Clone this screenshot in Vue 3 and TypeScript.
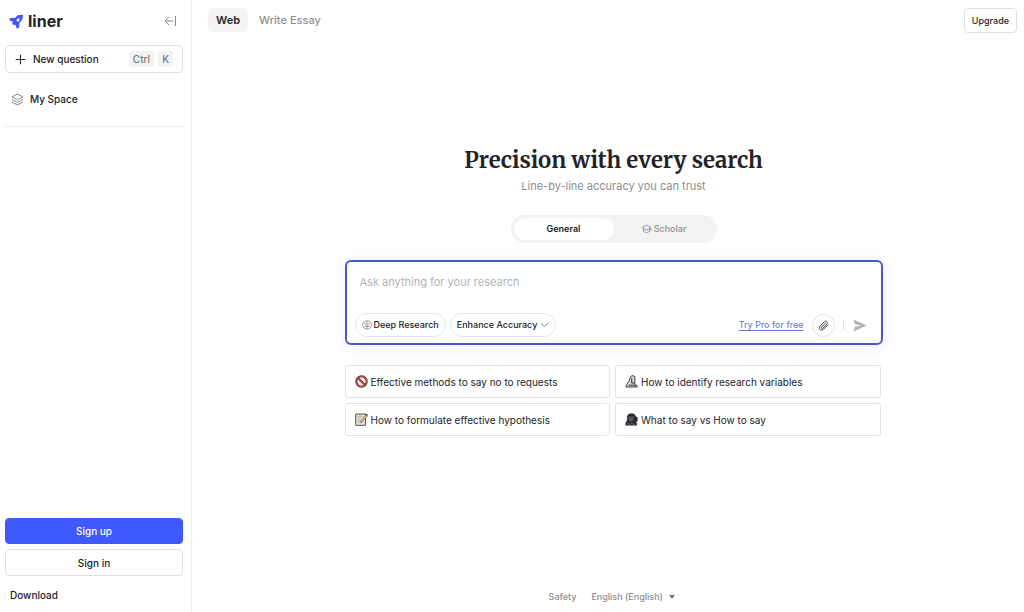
<script setup lang="ts">
import { ref } from 'vue'

type Art = 'prohibited' | 'memo' | 'microscope' | 'speaking'
interface Suggestion {
  art: Art
  text: string
}

const modes = ['Web', 'Write Essay']
const activeMode = ref('Web')
const scope = ref<'General' | 'Scholar'>('General')
const question = ref('')
const language = ref('en')
const suggestions: Suggestion[] = [
  { art: 'prohibited', text: 'Effective methods to say no to requests' },
  { art: 'microscope', text: 'How to identify research variables' },
  { art: 'memo', text: 'How to formulate effective hypothesis' },
  { art: 'speaking', text: 'What to say vs How to say' },
]
</script>

<template>
  <div class="page">
    <aside class="sidebar">
      <div class="brand-row">
        <a class="brand" href="#" aria-label="liner home">
          <svg class="logo" viewBox="0 0 15 15" aria-hidden="true">
            <path d="M14.2.7 8.6 1.300 6.300 3.800.9 4.200.3 6.300l3.300 1.300-.3 2.200 1 1.100 2.200-.2 1.200 3.800 2.300-.6.500-5.200 2.600-2.600z" fill="#4257f5" />
            <path d="m8.300 4.700 2.500-.4-.5 2.500L8.900 8 7.200 6.300z" fill="#e3e8ff" />
          </svg>
          <span class="wordmark">liner</span>
        </a>
        <button class="collapse" type="button" aria-label="Collapse sidebar">
          <svg viewBox="0 0 13 12" aria-hidden="true">
            <path d="M9.500 6H1M5 2 1 6l4 4M11.500 1v10" fill="none" stroke="#88888c" />
          </svg>
        </button>
      </div>

      <button class="new-question" type="button">
        <svg viewBox="0 0 12 12" aria-hidden="true">
          <path d="M6 .8v10.400M.8 6h10.400" fill="none" stroke="#28282c" stroke-width="1.200" />
        </svg>
        <span class="grow">New question</span>
        <kbd>Ctrl</kbd>
        <kbd>K</kbd>
      </button>

      <nav class="space-nav">
        <a class="space" href="#">
          <svg viewBox="0 0 13 13" aria-hidden="true">
            <path d="M6.500 1 12 3.900 6.500 6.800 1 3.900zM1 6.500l5.500 2.900L12 6.500M1 9.100 6.500 12 12 9.100" fill="none" stroke="#7c7c80" stroke-width=".9" stroke-linejoin="round" />
          </svg>
          My Space
        </a>
      </nav>

      <div class="account">
        <button class="sign-up" type="button">Sign up</button>
        <button class="sign-in" type="button">Sign in</button>
        <a class="download" href="#">Download</a>
      </div>
    </aside>

    <div class="content">
      <header class="topbar">
        <nav class="modes">
          <button
            v-for="mode in modes"
            :key="mode"
            type="button"
            class="mode"
            :class="{ active: activeMode === mode }"
            @click="activeMode = mode"
          >{{ mode }}</button>
        </nav>
        <button class="upgrade" type="button">Upgrade</button>
      </header>

      <main class="hero">
        <h1>Precision with every search</h1>
        <p class="tagline">Line-by-line accuracy you can trust</p>

        <div class="scopes">
          <button type="button" :class="{ active: scope === 'General' }" @click="scope = 'General'">General</button>
          <button type="button" :class="{ active: scope === 'Scholar' }" @click="scope = 'Scholar'">
            <svg viewBox="0 0 12 11" aria-hidden="true">
              <path d="M6 1.300 11 4 6 6.700 1 4zM2.700 5.200v3.100Q6 10.900 9.300 8.300V5.200M11 4v3.600" fill="none" stroke="#919195" stroke-linejoin="round" />
            </svg>
            Scholar
          </button>
        </div>

        <form class="ask" @submit.prevent>
          <textarea v-model="question" rows="1" aria-label="Question" placeholder="Ask anything for your research"></textarea>
          <div class="tools">
            <button class="pill" type="button">
              <svg class="brain" viewBox="0 0 11 11" aria-hidden="true">
                <path d="M5.500 1.200C4.400.3 2.900.8 2.600 2 1.200 2.200.7 3.500 1.100 4.500.1 5.400.6 7 1.600 7.400c-.1 1.400 1 2.100 2 1.900.4.9 1.400 1 1.900.5.5.5 1.500.4 1.900-.5 1 .2 2.100-.5 2-1.900 1-.4 1.500-2 .5-2.900.4-1-.1-2.300-1.500-2.500C8.100.8 6.600.3 5.500 1.200zM5.500 1.200v8.600M2.600 3.700q1.400 0 1.400 1.500M2.500 7h3M8.400 3.700Q7 3.700 7 5.200M8.500 7h-3" fill="none" stroke="#77777b" stroke-width=".8" />
              </svg>
              Deep Research
            </button>
            <button class="pill" type="button">
              Enhance Accuracy
              <svg class="chevron" viewBox="0 0 9 6" aria-hidden="true">
                <path d="m.8 1 3.700 3.700L8.200 1" fill="none" stroke="#88888c" />
              </svg>
            </button>
            <a class="try-pro" href="#">Try Pro for free</a>
            <button class="attach" type="button" aria-label="Attach a file">
              <svg viewBox="0 0 12 12" aria-hidden="true">
                <path d="m10.800 5.200-4.700 4.900c-1 1-2.700 1.300-3.800.3s-.9-2.700.1-3.800l4.500-4.700c.8-.8 2-.9 2.800-.1s.7 2-.1 2.800L5.300 9c-.4.400-1 .5-1.400.1s-.4-1 0-1.400L8 3.500" fill="none" stroke="#3b3b3f" stroke-linecap="round" />
              </svg>
            </button>
            <span class="rule"></span>
            <button class="send" type="submit" aria-label="Send">
              <svg viewBox="0 0 14 13" aria-hidden="true">
                <path d="M.5.500 13.700 6.500.5 12.500 1.900 7.700 8 6.500 1.900 5.300z" fill="#b2b2b5" />
              </svg>
            </button>
          </div>
        </form>

        <div class="suggestions">
          <button v-for="item in suggestions" :key="item.text" type="button" class="suggestion">
            <svg v-if="item.art === 'prohibited'" viewBox="0 0 13 13" aria-hidden="true">
              <circle cx="6.500" cy="6.500" r="5.200" fill="#f1e9e8" stroke="#5d302d" stroke-width="2" />
              <path d="m3 3 7 7" stroke="#5d302d" stroke-width="1.800" />
              <circle cx="6.500" cy="6.500" r="5.200" fill="none" stroke="#b84a42" stroke-width="1.100" />
              <path d="m3 3 7 7" stroke="#b84a42" stroke-width="1" />
            </svg>
            <svg v-else-if="item.art === 'memo'" viewBox="0 0 13 13" aria-hidden="true">
              <path d="M.7 1h9.800v11.300H.7z" fill="#e7e5da" stroke="#55554f" />
              <path d="M2.300 3.200h5M2.300 5.200h4M2.300 7.200h3M2.300 9.200h4" stroke="#999991" stroke-width=".7" />
              <path d="m5.600 9.700.7-2.400 4.600-5.600 1.500 1.200-4.700 5.700z" fill="#e4c980" stroke="#5c5030" stroke-width=".6" />
              <path d="m10.900 1.700.8-.9 1.100.9-.4 1.200z" fill="#44363a" />
            </svg>
            <svg v-else-if="item.art === 'microscope'" viewBox="0 0 13 13" aria-hidden="true">
              <path d="M1 12h11v-1.700H9.900V1.800L8.600.8H6.500L4.600 3.500v2.200Q2.200 7 1.900 9.800L1 10.600z" fill="#d4d7d8" stroke="#3c3f41" />
              <path d="M6.700 3.200V8h3M3.500 10.200h6.400" fill="none" stroke="#35393b" />
            </svg>
            <svg v-else viewBox="0 0 13 13" aria-hidden="true">
              <path d="M2.300 7.600V3.500Q2.800.7 6 .7h1.700q2.700.5 2.800 2.900l1.800.8v3.700l-1.800.8 1.200 1.300v2H.8V9.800z" fill="#292a2d" stroke="#202124" stroke-width=".5" />
              <path d="M3.600 3.300q3.600 1.200 5-.8v4L7.200 8.600H4.900L3.400 6.500z" fill="#56585d" />
              <path d="m1.700 10.300 2.600 1.200 2.500-1 2.800 1.100" fill="none" stroke="#77787b" stroke-width=".8" />
            </svg>
            {{ item.text }}
          </button>
        </div>
      </main>

      <footer class="footer">
        <a href="#">Safety</a>
        <label class="language">
          <select v-model="language" aria-label="Language">
            <option value="en">English (English)</option>
          </select>
          <svg viewBox="0 0 6 4" aria-hidden="true"><path d="M0 0h6L3 4z" fill="#77777b" /></svg>
        </label>
      </footer>
    </div>
  </div>
</template>

<style>
body {
  margin: 0;
  background: #fff;
}
</style>

<style scoped>
.page,
.page * {
  box-sizing: border-box;
}
.page {
  display: flex;
  min-height: 100vh;
  color: #232327;
  font: 500 10px/16px Inter, "Liberation Sans", sans-serif;
}
button,
textarea,
select,
kbd {
  margin: 0;
  font: inherit;
  color: inherit;
}
button {
  padding: 0;
  border: 0;
  background: none;
  cursor: pointer;
}
a {
  color: inherit;
  text-decoration: none;
}
svg {
  display: block;
  flex: none;
}
.sidebar {
  display: flex;
  flex-direction: column;
  flex: 0 0 192px;
  padding: 8px 8px 8px 5px;
  border-right: 1px solid #efeff1;
}
.brand-row {
  display: flex;
  align-items: center;
  justify-content: space-between;
  height: 26px;
  padding: 0 6px 0 4px;
}
.brand {
  display: flex;
  align-items: center;
  gap: 4px;
}
.logo {
  width: 15px;
  height: 15px;
}
.wordmark {
  font-size: 16px;
  line-height: 24px;
  font-weight: 700;
}
.collapse svg {
  width: 13px;
  height: 12px;
}
.new-question {
  display: flex;
  align-items: center;
  gap: 4px;
  height: 28px;
  margin-top: 11px;
  padding: 0 9px;
  border: 1px solid #e0e0e3;
  border-radius: 4px;
  text-align: left;
}
.new-question svg {
  width: 11px;
  height: 11px;
  margin-right: 3px;
}
.grow {
  flex: 1;
}
kbd {
  padding: 0 4px;
  border-radius: 3px;
  background: #f3f3f5;
  color: #77777b;
}
.space-nav {
  margin-top: 12px;
  padding-bottom: 13px;
  border-bottom: 1px solid #ececee;
}
.space {
  display: flex;
  align-items: center;
  gap: 6px;
  height: 28px;
  padding-left: 6px;
}
.space svg {
  width: 13px;
  height: 13px;
}
.account {
  display: flex;
  flex-direction: column;
  gap: 5px;
  margin-top: auto;
}
.sign-up,
.sign-in {
  height: 27px;
  border: 1px solid #e0e0e3;
  border-radius: 4px;
}
.sign-up {
  height: 26px;
  border-color: #4059ff;
  background: #4059ff;
  color: #fff;
}
.download {
  padding: 6px 5px 1px;
}
.content {
  display: flex;
  flex: 1;
  flex-direction: column;
  min-width: 0;
}
.topbar {
  display: flex;
  justify-content: space-between;
  padding: 8px 7px 0 16px;
}
.modes {
  display: flex;
  gap: 3px;
}
.mode {
  height: 24px;
  padding: 0 8px;
  border-radius: 5px;
  color: #8e8e92;
  font-size: 11px;
}
.mode.active {
  background: #f3f3f4;
  color: #232327;
  font-weight: 600;
}
.upgrade {
  height: 25px;
  padding: 0 7px;
  border: 1px solid #e0e0e3;
  border-radius: 4px;
  font-size: 9px;
}
.hero {
  display: flex;
  flex: 1;
  flex-direction: column;
  align-items: center;
  padding: 111px 16px 16px 27px;
}
h1 {
  margin: 0;
  font: 700 22px/32px Merriweather, "Noto Serif", "DejaVu Serif Condensed", "DejaVu Serif", serif;
}
.tagline {
  margin: 2px 0 0;
  color: #8e8e92;
  font-size: 11px;
  font-weight: 400;
}
.scopes {
  display: flex;
  width: 206px;
  height: 28px;
  margin-top: 21px;
  padding: 3px;
  border-radius: 14px;
  background: #f3f3f4;
}
.scopes button {
  display: flex;
  flex: 1;
  align-items: center;
  justify-content: center;
  gap: 2px;
  border-radius: 11px;
  color: #919195;
  font-size: 9px;
}
.scopes .active {
  background: #fff;
  color: #232327;
  font-weight: 600;
}
.scopes svg {
  width: 11px;
  height: 10px;
}
.ask {
  width: 100%;
  max-width: 538px;
  margin-top: 17px;
  padding: 12px 8px 6px;
  border: 2px solid #4a57cd;
  border-radius: 6px;
  box-shadow: 0 2px 12px #4059ff1c;
}
textarea {
  display: block;
  width: 100%;
  height: 39px;
  padding: 0 5px;
  border: 0;
  outline: 0;
  resize: none;
  background: none;
  font-size: 11px;
  font-weight: 400;
}
textarea::placeholder {
  color: #b4b4b8;
}
.tools {
  display: flex;
  align-items: center;
  gap: 4px;
}
.pill {
  display: flex;
  align-items: center;
  gap: 2px;
  height: 24px;
  padding: 0 6px;
  border: 1px solid #e8e8ea;
  border-radius: 12px;
  font-size: 9px;
}
.brain {
  width: 10px;
  height: 10px;
}
.chevron {
  width: 9px;
  height: 6px;
  margin-left: 1px;
}
.try-pro {
  margin-left: auto;
  margin-right: 4px;
  color: #6570cf;
  font-size: 9px;
  font-weight: 400;
  text-decoration: underline;
  text-underline-offset: 2px;
}
.attach {
  display: grid;
  place-items: center;
  width: 23px;
  height: 23px;
  border: 1px solid #e2e2e5;
  border-radius: 50%;
}
.attach svg {
  width: 11px;
  height: 11px;
}
.rule {
  width: 1px;
  height: 10px;
  margin: 0 5px 0 4px;
  background: #e0e0e3;
}
.send {
  margin-right: 6px;
}
.send svg {
  width: 14px;
  height: 13px;
}
.suggestions {
  display: grid;
  grid-template-columns: 1fr 1fr;
  gap: 5px;
  width: 100%;
  max-width: 538px;
  margin-top: 20px;
  padding-right: 2px;
}
.suggestion {
  display: flex;
  align-items: center;
  gap: 3px;
  min-height: 33px;
  padding: 0 9px;
  border: 1px solid #e3e3e6;
  border-radius: 3px;
  font-weight: 400;
  text-align: left;
}
.suggestion svg {
  width: 13px;
  height: 13px;
}
.footer {
  display: flex;
  justify-content: center;
  gap: 15px;
  padding: 0 0 7px 8px;
  color: #8e8e92;
  font-size: 9px;
}
.language {
  display: flex;
  align-items: center;
  gap: 6px;
}
select {
  padding: 0;
  border: 0;
  appearance: none;
  background: none;
}
.language svg {
  width: 6px;
  height: 4px;
}
</style>
